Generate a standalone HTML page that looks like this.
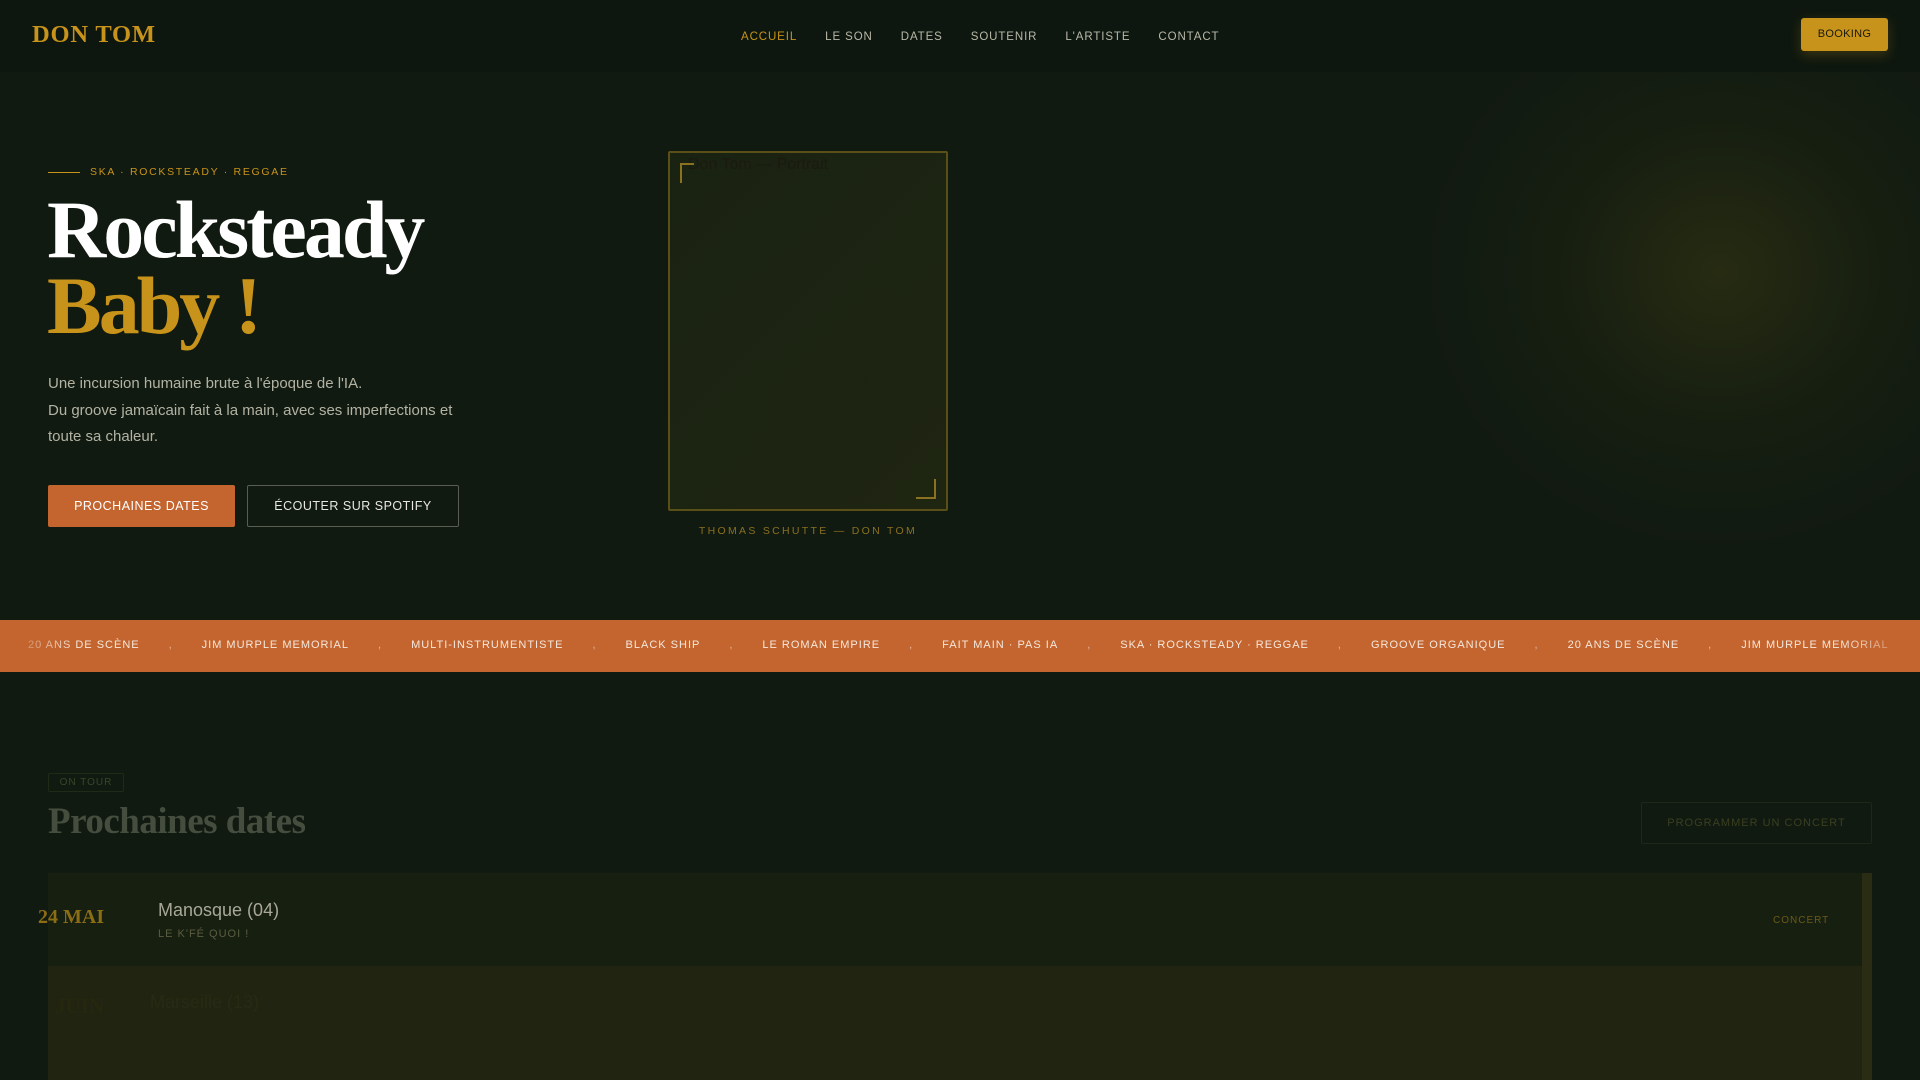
<!DOCTYPE html>
<html><head><meta charset="utf-8"><style>
*{margin:0;padding:0;box-sizing:border-box}
body{width:1920px;height:1080px;overflow:hidden;background:#111a11;font-family:"Liberation Sans",sans-serif;position:relative}
.glow{position:absolute;left:1300px;top:72px;width:620px;height:560px;background:radial-gradient(ellipse 300px 280px at 420px 200px,rgba(60,60,18,.5),rgba(40,45,15,.22) 55%,rgba(0,0,0,0) 100%)}
nav{position:absolute;left:0;top:0;width:1920px;height:72px;background:#0e170f}
.logo{position:absolute;left:32px;top:21px;font-family:"Liberation Serif",serif;font-weight:bold;font-size:24.5px;color:#c8931a;letter-spacing:.8px}
.links{position:absolute;left:741px;top:31px;display:flex;gap:28px;font-size:11.5px;letter-spacing:.9px;color:#b8b8a8}
.links span:first-child{color:#c8931a}
.book{position:absolute;left:1801px;top:18px;width:87px;height:33px;background:#c8931a;border-radius:3px;font-size:11px;color:#1a1a0a;text-align:center;line-height:33px;letter-spacing:.3px;box-shadow:0 4px 12px rgba(200,147,26,.25)}
.tag{position:absolute;left:48px;top:166px;font-size:10.5px;letter-spacing:1.7px;color:#c8931a}
.tag:before{content:"";display:inline-block;width:32px;height:1px;background:#c8931a;vertical-align:middle;margin-right:10px}
h1{position:absolute;left:47px;top:192px;font-family:"Liberation Serif",serif;font-weight:bold;font-size:82px;line-height:76px;letter-spacing:-3px;color:#fff}
h1 span{color:#c8931a}
.p{position:absolute;left:48px;top:371px;font-size:15px;line-height:26.5px;color:#b3b3a3}
.b1{position:absolute;left:48px;top:485px;width:187px;height:42px;background:#c4652f;border-radius:2px;color:#fff;font-size:12.5px;letter-spacing:.5px;text-align:center;line-height:42px}
.b2{position:absolute;left:247px;top:485px;width:212px;height:42px;border:1px solid #5a5e52;border-radius:2px;color:#e8e8e0;font-size:12.5px;letter-spacing:.5px;text-align:center;line-height:40px}
.frame{position:absolute;left:668px;top:151px;width:280px;height:360px;border:2px solid #5a4f17;border-radius:2px;background:linear-gradient(135deg,#1a2212,#1e2511)}
.frame .alt{position:absolute;left:18px;top:3px;font-size:16px;color:#1a1a10}
.frame .c1{position:absolute;left:10px;top:10px;width:14px;height:20px;border-left:2px solid #8a7220;border-top:2px solid #8a7220}
.frame .c2{position:absolute;right:10px;bottom:10px;width:20px;height:20px;border-right:2px solid #8a7220;border-bottom:2px solid #8a7220}
.cap{position:absolute;left:668px;width:280px;top:525px;text-align:center;font-size:10.5px;letter-spacing:2.3px;color:#8a7020}
.ticker{position:absolute;left:0;top:620px;width:1920px;height:52px;background:#c4652f;overflow:hidden}
.tk{position:absolute;left:28px;top:19px;display:flex;white-space:nowrap;font-size:11px;letter-spacing:1px;color:#f5e8dc}
.tk i{font-style:normal;padding:0 29px;opacity:.6}
.fade{position:absolute;top:0;height:52px;width:80px}
.badge{position:absolute;left:48px;top:773px;width:76px;height:19px;border:1px solid #1f2a17;border-radius:2px;font-size:10px;letter-spacing:1px;color:#3a4528;text-align:center;line-height:17px}
h2{position:absolute;left:48px;top:800px;font-family:"Liberation Serif",serif;font-weight:bold;font-size:37px;color:#454d3f;letter-spacing:-.5px}
.prog{position:absolute;left:1641px;top:802px;width:231px;height:42px;border:1px solid #1e2718;border-radius:2px;font-size:11px;letter-spacing:1px;color:#3a3f20;text-align:center;line-height:40px}
.card{position:absolute;left:48px;top:873px;width:1824px;height:207px;background:#212410}
.row1{position:absolute;left:48px;top:873px;width:1814px;height:93px;background:#171f10}
.edge{position:absolute;left:1862px;top:873px;width:10px;height:207px;background:#2a2c14}
.d{position:absolute;left:38px;top:906px;font-family:"Liberation Serif",serif;font-weight:bold;font-size:20px;color:#8a6d14}
.city{position:absolute;left:158px;top:900px;font-size:18px;color:#a8a898}
.venue{position:absolute;left:158px;top:928px;font-size:11px;letter-spacing:1px;color:#5a5d40}
.con{position:absolute;left:1773px;top:915px;font-size:10px;letter-spacing:1px;color:#6a5a18}
.d2{position:absolute;left:55px;top:994px;font-family:"Liberation Serif",serif;font-weight:bold;font-size:21px;color:#25280f}
.city2{position:absolute;left:150px;top:992px;font-size:18px;color:#272b14}
</style></head><body>
<div class="glow"></div>
<nav>
<div class="logo">DON TOM</div>
<div class="links"><span>ACCUEIL</span><span>LE SON</span><span>DATES</span><span>SOUTENIR</span><span>L'ARTISTE</span><span>CONTACT</span></div>
<div class="book">BOOKING</div>
</nav>
<div class="tag">SKA · ROCKSTEADY · REGGAE</div>
<h1>Rocksteady<br><span>Baby !</span></h1>
<div class="p">Une incursion humaine brute à l'époque de l'IA.<br>Du groove jamaïcain fait à la main, avec ses imperfections et<br>toute sa chaleur.</div>
<div class="b1">PROCHAINES DATES</div>
<div class="b2">ÉCOUTER SUR SPOTIFY</div>
<div class="frame"><div class="alt">Don Tom — Portrait</div><div class="c1"></div><div class="c2"></div></div>
<div class="cap">THOMAS SCHUTTE — DON TOM</div>
<div class="ticker"><div class="tk"><span>20 ANS DE SCÈNE</span><i>,</i><span>JIM MURPLE MEMORIAL</span><i>,</i><span>MULTI-INSTRUMENTISTE</span><i>,</i><span>BLACK SHIP</span><i>,</i><span>LE ROMAN EMPIRE</span><i>,</i><span>FAIT MAIN · PAS IA</span><i>,</i><span>SKA · ROCKSTEADY · REGGAE</span><i>,</i><span>GROOVE ORGANIQUE</span><i>,</i><span>20 ANS DE SCÈNE</span><i>,</i><span>JIM MURPLE MEMORIAL</span></div>
<div class="fade" style="left:0;background:linear-gradient(90deg,#c4652f,rgba(196,101,47,0))"></div>
<div class="fade" style="right:0;background:linear-gradient(270deg,#c4652f,rgba(196,101,47,0))"></div></div>
<div class="badge">ON TOUR</div>
<h2>Prochaines dates</h2>
<div class="prog">PROGRAMMER UN CONCERT</div>
<div class="card"></div><div class="row1"></div><div class="edge"></div>
<div class="d">24 MAI</div>
<div class="city">Manosque (04)</div>
<div class="venue">LE K'FÉ QUOI !</div>
<div class="con">CONCERT</div>
<div class="d2">JUIN</div><div class="city2">Marseille (13)</div>
</body></html>
